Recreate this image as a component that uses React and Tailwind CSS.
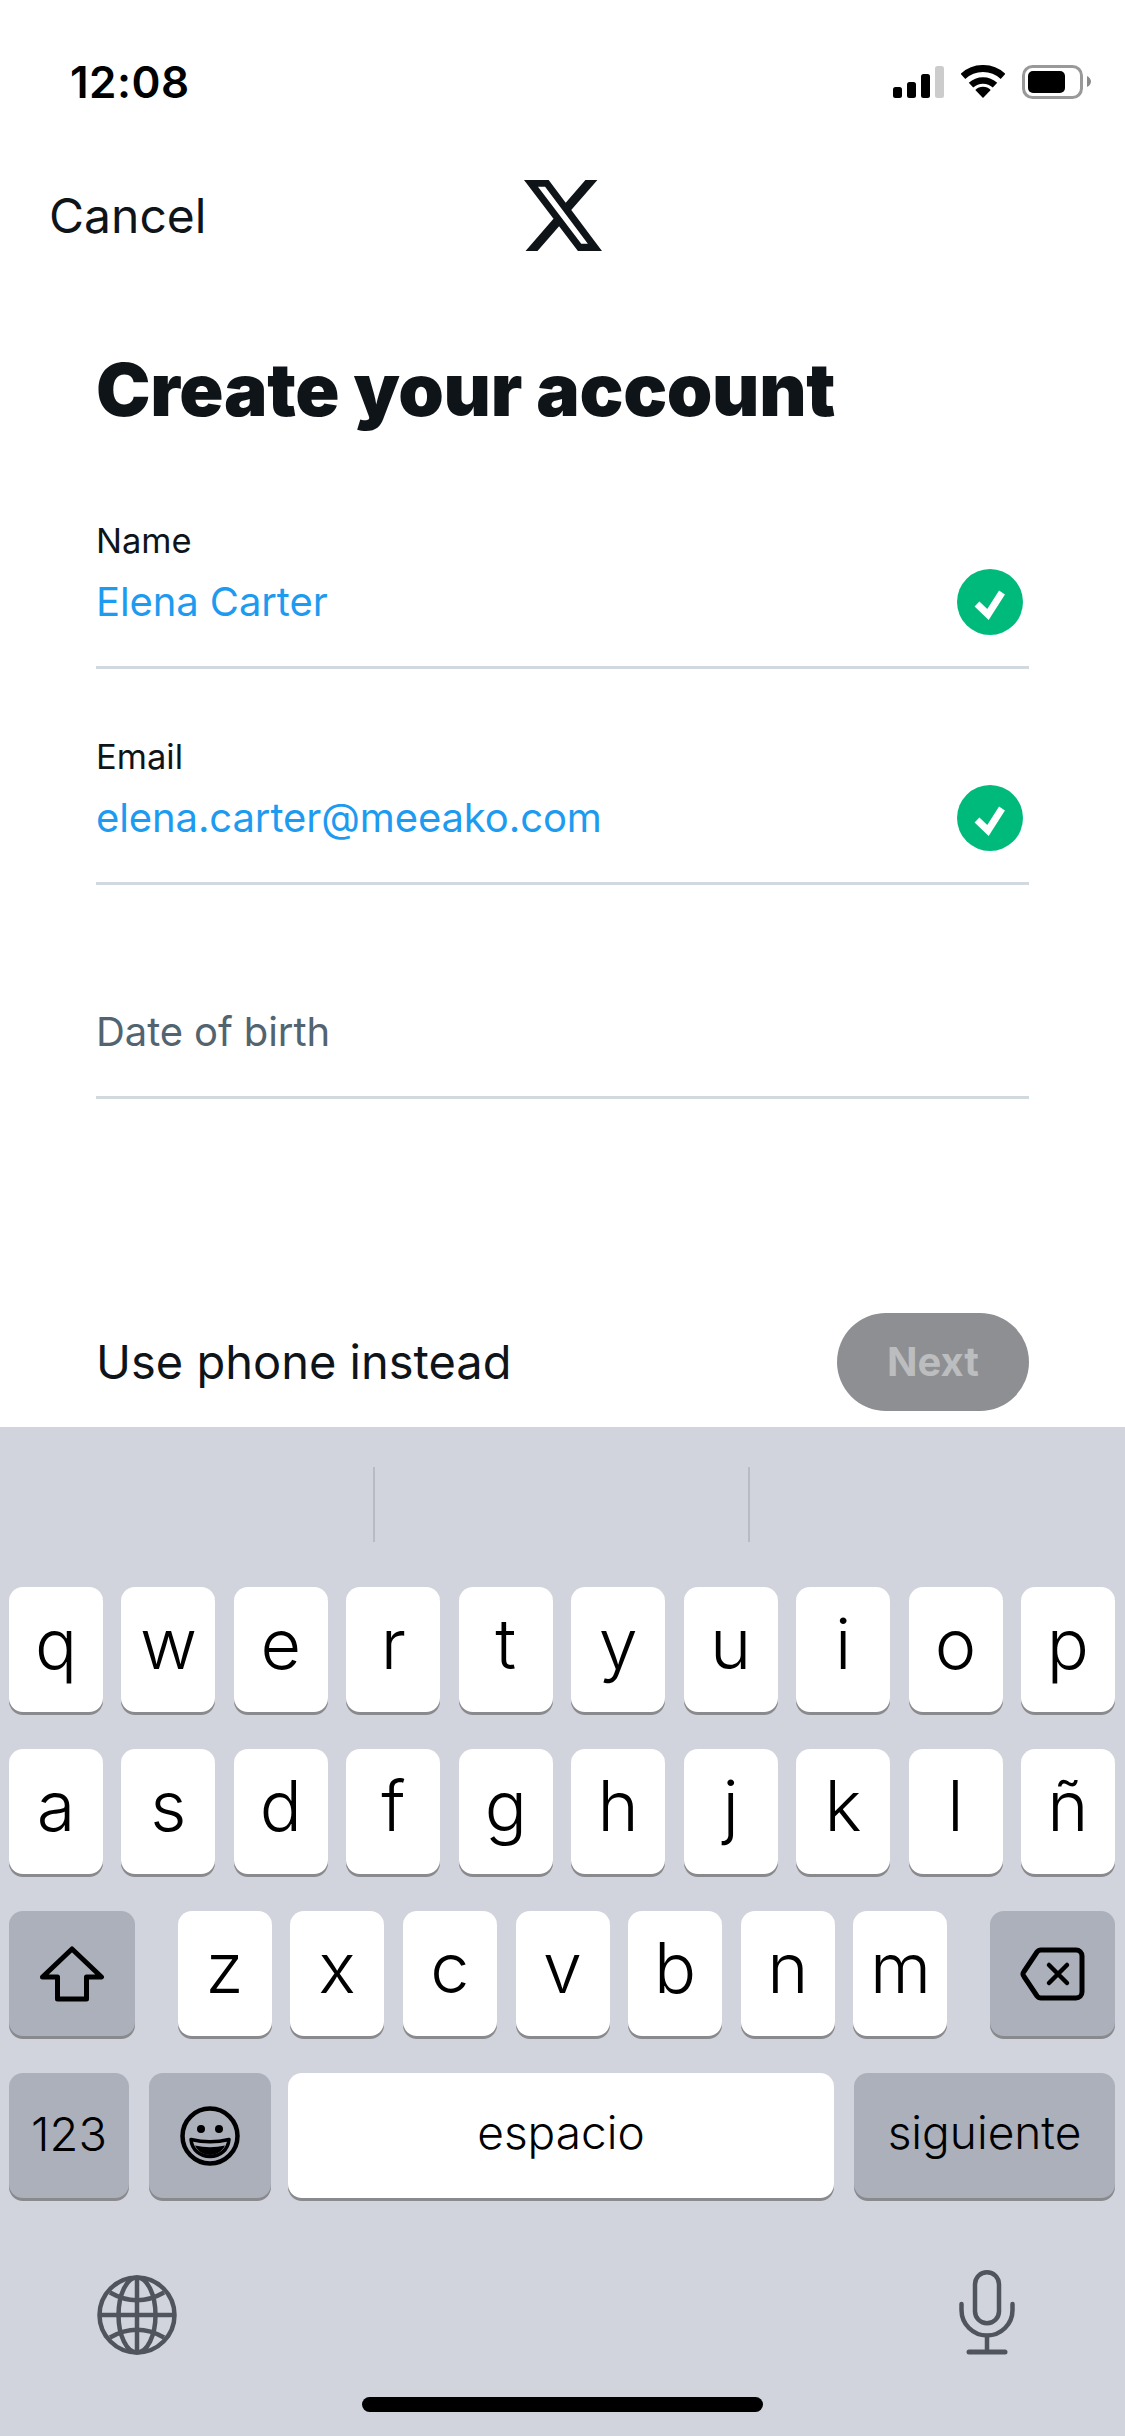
const FONT = "font-['Inter','Noto_Sans',sans-serif]";

function Signal() {
  return (
    <svg width="51" height="32" viewBox="0 0 51 32" className="mt-px">
      <rect x="0" y="21" width="9" height="11" rx="2.5" fill="#000" />
      <rect x="14" y="16" width="9" height="16" rx="2.5" fill="#000" />
      <rect x="28" y="8" width="9" height="24" rx="2.5" fill="#000" />
      <rect x="42" y="0" width="9" height="32" rx="2.5" fill="#cccccc" />
    </svg>
  );
}

function Wifi() {
  return (
    <svg width="44" height="33" viewBox="0 0 44 33" fill="none">
      <path d="M1.9 11.4A29.5 29.5 0 0 1 42.1 11.4" stroke="#000" strokeWidth="7" />
      <path d="M10 20.2A17.5 17.5 0 0 1 34 20.2" stroke="#000" strokeWidth="6.5" />
      <path d="M22 33L14.3 25A11 11 0 0 1 29.7 25Z" fill="#000" />
    </svg>
  );
}

function Battery() {
  return (
    <svg width="69" height="34" viewBox="0 0 69 34" fill="none">
      <rect x="1.5" y="1.5" width="58" height="31" rx="9" stroke="#999999" strokeWidth="3" />
      <rect x="6" y="6" width="37" height="22" rx="5" fill="#000" />
      <path d="M65 11C67.5 12 69 14.5 69 16.5C69 18.5 67.5 21 65 22Z" fill="#8a8a8a" />
    </svg>
  );
}

function XLogo() {
  return (
    <svg width="78" height="71" viewBox="1.254 2.25 21.573 19.5" preserveAspectRatio="none">
      <path
        fill="#0f1419"
        d="M18.244 2.25h3.308l-7.227 8.26 8.502 11.24H16.17l-5.214-6.817L4.99 21.75H1.68l7.73-8.835L1.254 2.25H8.08l4.713 6.231zm-1.161 17.52h1.833L7.084 4.126H5.117z"
      />
    </svg>
  );
}

function Check() {
  return (
    <svg width="66" height="66" viewBox="0 0 66 66" fill="none" className="shrink-0">
      <circle cx="33" cy="33" r="33" fill="#00ba7c" />
      <path d="M20 35L31 45.5L45 23.5" stroke="#fff" strokeWidth="7" />
    </svg>
  );
}

function Field({ label, value, valueClass, check }) {
  return (
    <div className="ml-[96px] w-[933px] border-b-[3px] border-[#cfd9de]">
      {label && (
        <div className="text-[34.5px] leading-[42px] mb-[7px] text-[#0f1419]">{label}</div>
      )}
      <div className="flex items-center justify-between pr-[6px] pb-[31px]">
        <span className={`text-[40px] leading-[66px] tracking-[-0.1px] ${valueClass}`}>{value}</span>
        {check && <Check />}
      </div>
    </div>
  );
}

function Key({ children, className = "" }) {
  return (
    <div
      className={`h-[125px] rounded-[14px] flex items-center justify-center text-black shadow-[0_3px_0_#898a8d] ${className}`}
    >
      {children}
    </div>
  );
}

function Letter({ c }) {
  return (
    <Key className="w-[94px] bg-white">
      <span className="text-[70px] leading-none font-[350] pb-[12px]">{c}</span>
    </Key>
  );
}

function ShiftIcon() {
  return (
    <svg width="66" height="56" viewBox="0 0 66 56" fill="none">
      <path
        d="M33 3L62.5 31H47.5V53H18.5V31H3.5Z"
        stroke="#000"
        strokeWidth="5"
        strokeLinejoin="round"
      />
    </svg>
  );
}

function DeleteIcon() {
  return (
    <svg width="65" height="54" viewBox="0 0 65 54" fill="none">
      <path
        d="M21 3H56A6 6 0 0 1 62 9V45A6 6 0 0 1 56 51H21A5 5 0 0 1 17 49L4 29.5A4 4 0 0 1 4 24.5L17 5A5 5 0 0 1 21 3Z"
        stroke="#000"
        strokeWidth="5"
        strokeLinejoin="round"
      />
      <path d="M29 18L47 36M47 18L29 36" stroke="#000" strokeWidth="4.5" strokeLinecap="round" />
    </svg>
  );
}

function EmojiIcon() {
  return (
    <svg width="60" height="60" viewBox="0 0 60 60" fill="none">
      <circle cx="30" cy="30" r="27.5" stroke="#000" strokeWidth="4.5" />
      <circle cx="21" cy="23" r="4" fill="#000" />
      <circle cx="39" cy="23" r="4" fill="#000" />
      <path d="M11 33.5Q30 38 49 33.5C48 44 40 50.5 30 50.5C20 50.5 12 44 11 33.5Z" stroke="#000" strokeWidth="3.5" strokeLinejoin="round" />
      <path d="M15 39.5Q30 43 45 39.5C42 45.5 36.5 49 30 49C23.5 49 18 45.5 15 39.5Z" fill="#000" />
    </svg>
  );
}

function Globe() {
  return (
    <svg width="80" height="80" viewBox="0 0 80 80" fill="none" stroke="#50545d" strokeWidth="4.5">
      <circle cx="40" cy="40" r="37.5" />
      <ellipse cx="40" cy="40" rx="18.5" ry="37.5" />
      <path d="M40 2.5V77.5M2.5 40H77.5" />
      <path d="M13 17.5Q40 33 67 17.5M13 62.5Q40 47 67 62.5" />
    </svg>
  );
}

function Mic() {
  return (
    <svg width="56" height="85" viewBox="0 0 56 85" fill="none" stroke="#50545d" strokeWidth="4.5" strokeLinecap="round">
      <rect x="16" y="2.25" width="24" height="51" rx="12" />
      <path d="M2.5 34V40A25.5 25.5 0 0 0 53.5 40V34" />
      <path d="M28 66V81" strokeLinecap="butt" />
      <path d="M10 82H46" strokeWidth="5" />
    </svg>
  );
}

const ROW1 = ["q", "w", "e", "r", "t", "y", "u", "i", "o", "p"];
const ROW2 = ["a", "s", "d", "f", "g", "h", "j", "k", "l", "ñ"];
const ROW3 = ["z", "x", "c", "v", "b", "n", "m"];

export default function App() {
  return (
    <div className={`w-[1125px] h-[2436px] bg-white flex flex-col overflow-hidden ${FONT}`}>
      <div className="h-[180px] pt-[65px] pl-[70px] pr-[34px] flex justify-between items-start shrink-0">
        <span className="text-[44px] leading-[34px] font-semibold text-black tracking-[0.5px]">12:08</span>
        <div className="flex items-start gap-[17px]">
          <Signal />
          <Wifi />
          <Battery />
        </div>
      </div>

      <div className="grid grid-cols-[1fr_auto_1fr] items-center px-[49px] h-[71px] shrink-0">
        <span className="text-[48px] leading-[71px] text-[#0f1419]">Cancel</span>
        <XLogo />
        <span />
      </div>

      <h1 className="pl-[96px] mt-[95px] text-[73px] leading-[88px] font-black text-[#0f1419] tracking-[-0.33px] shrink-0">
        Create your account
      </h1>

      <div className="mt-[86px] flex flex-col shrink-0">
        <Field label="Name" value="Elena Carter" valueClass="text-[#1d9bf0]" check />
        <div className="mt-[67px]">
          <Field label="Email" value="elena.carter@meeako.com" valueClass="text-[#1d9bf0]" check />
        </div>
        <div className="mt-[114px]">
          <Field value="Date of birth" valueClass="text-[#536471]" />
        </div>
      </div>

      <div className="mt-[214px] pl-[96px] pr-[96px] flex items-center justify-between shrink-0">
        <span className="text-[47px] leading-[60px] text-[#0f1419]">Use phone instead</span>
        <div className="w-[192px] h-[98px] rounded-[49px] bg-[#8e8f92] flex items-center justify-center text-[40px] font-bold text-[#bcbdbe]">
          Next
        </div>
      </div>

      <div className="mt-auto h-[1009px] bg-[#d1d4dc] flex flex-col shrink-0">
        <div className="pt-[40px] pr-[3px] flex justify-center gap-[373px]">
          <div className="w-[2px] h-[75px] bg-[#b8bbc1]" />
          <div className="w-[2px] h-[75px] bg-[#b8bbc1]" />
        </div>

        <div className="mt-[45px] pl-[9px] pr-[10px] flex flex-col gap-[37px]">
          <div className="flex justify-between">
            {ROW1.map((c) => (
              <Letter key={c} c={c} />
            ))}
          </div>
          <div className="flex justify-between">
            {ROW2.map((c) => (
              <Letter key={c} c={c} />
            ))}
          </div>
          <div className="flex justify-between">
            <Key className="w-[126px] bg-[#abb0bb]">
              <ShiftIcon />
            </Key>
            <div className="flex gap-[18.67px]">
              {ROW3.map((c) => (
                <Letter key={c} c={c} />
              ))}
            </div>
            <Key className="w-[125px] bg-[#abb0bb]">
              <DeleteIcon />
            </Key>
          </div>
          <div className="flex">
            <Key className="w-[120px] bg-[#abb0bb]">
              <span className="text-[47px] font-[350] pb-[2px]">123</span>
            </Key>
            <Key className="ml-[20px] w-[122px] bg-[#abb0bb]">
              <EmojiIcon />
            </Key>
            <Key className="ml-[17px] w-[546px] bg-white">
              <span className="text-[46px] font-[350] pb-[6px]">espacio</span>
            </Key>
            <Key className="ml-[20px] w-[261px] bg-[#abb0bb]">
              <span className="text-[46px] font-[350] pb-[6px]">siguiente</span>
            </Key>
          </div>
        </div>

        <div className="mt-[72px] pl-[97px] pr-[110px] flex items-end justify-between">
          <Globe />
          <Mic />
        </div>

        <div className="mt-[42px] mx-auto w-[401px] h-[15px] rounded-full bg-black" />
      </div>
    </div>
  );
}
